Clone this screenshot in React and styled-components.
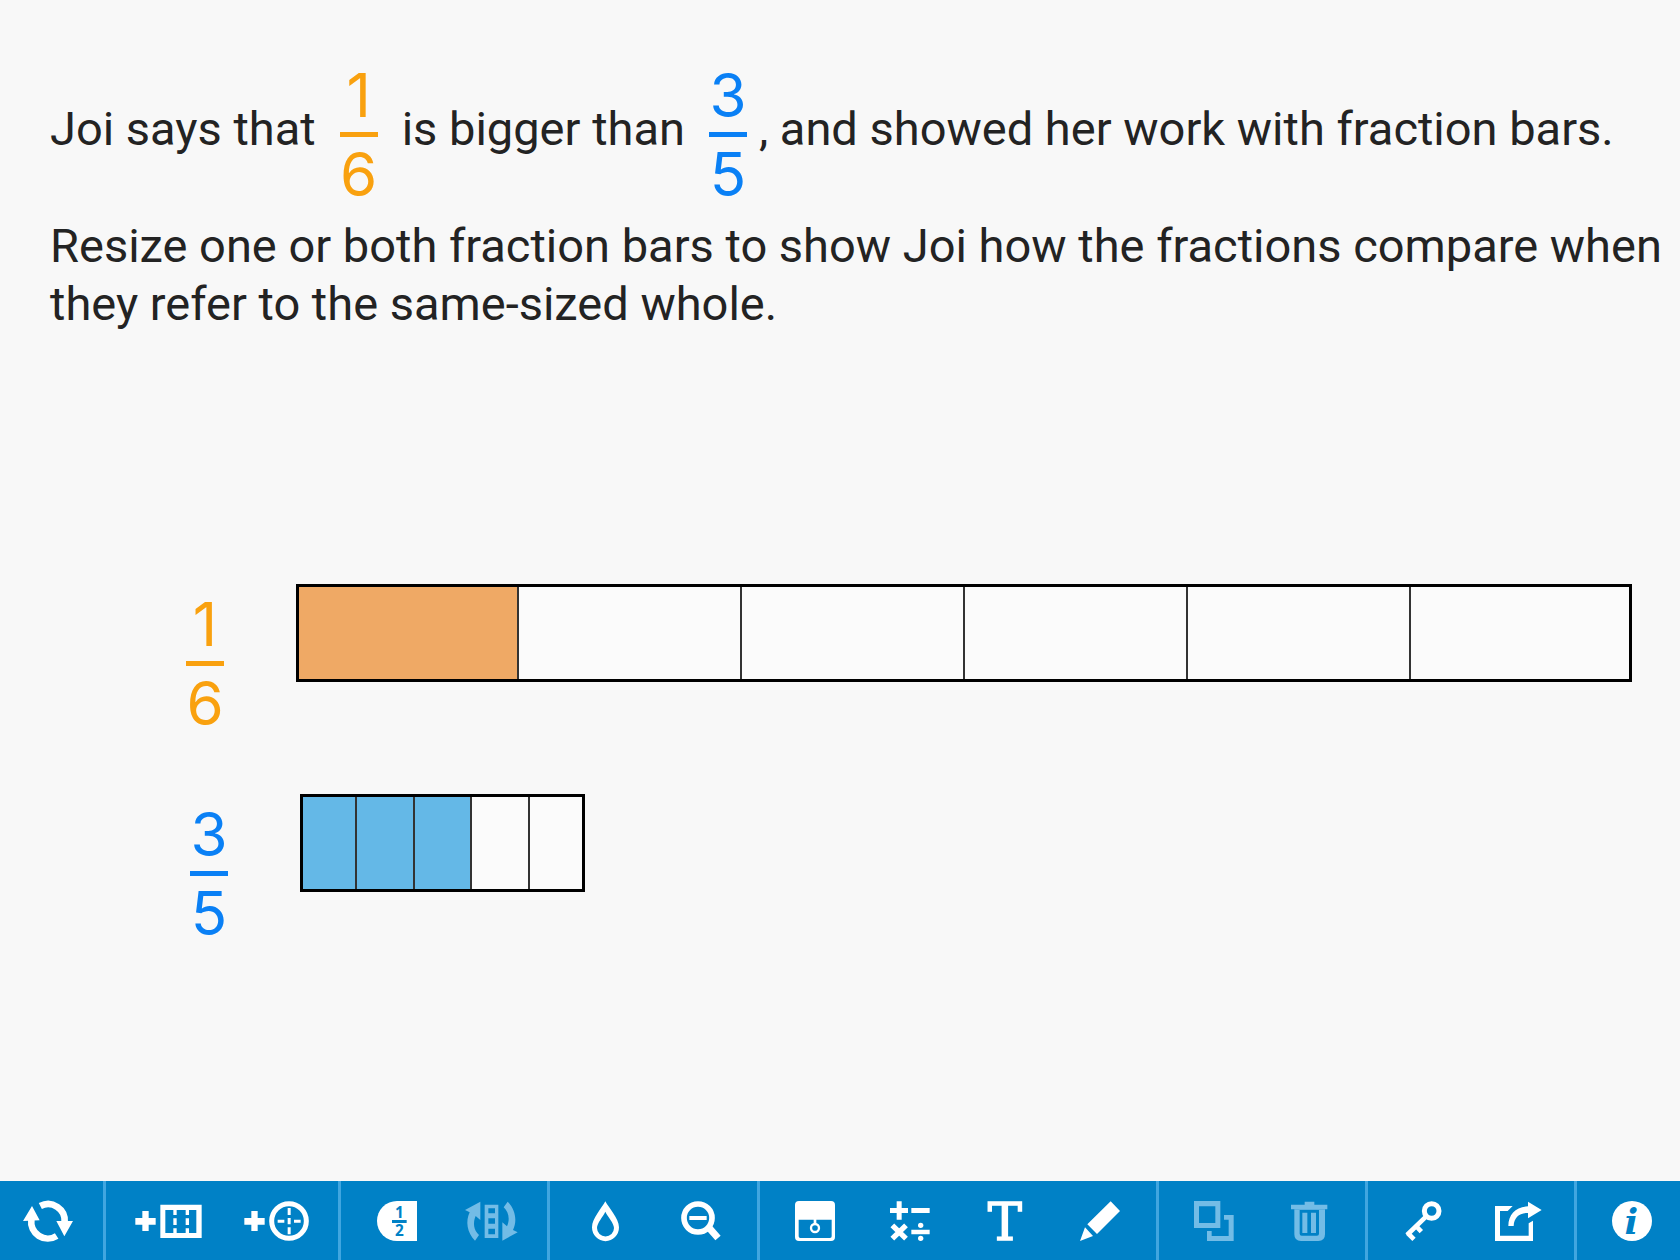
import React from "react";
import styled, { createGlobalStyle } from "styled-components";

const GlobalStyle = createGlobalStyle`
  * { box-sizing: border-box; }
  body {
    margin: 0;
    background: #f8f8f8;
    color: #232323;
    font-family: Roboto, Inter, "Liberation Sans", sans-serif;
  }
`;

const ORANGE = "#f9a10f";
const BLUE = "#0a80f5";

const Page = styled.div`
  display: flex;
  flex-direction: column;
  min-height: 100vh;
`;

const Workspace = styled.main`
  flex: 1;
  display: flex;
  flex-direction: column;
  gap: 251px;
  padding: 65px 0 48px;
`;

const Problem = styled.section`
  display: flex;
  flex-direction: column;
  gap: 13px;
  padding-left: 50px;
  font-size: 47px;
  line-height: 58px;
`;

const Statement = styled.p`
  display: flex;
  align-items: center;
  gap: 24px;
  margin: 0;
`;

const Clause = styled.span`
  display: flex;
  align-items: center;
  gap: 12px;
`;

const Phrase = styled.span`
  padding-bottom: 12px;
  white-space: nowrap;
`;

const Instruction = styled.p`
  margin: 0;
`;

const FractionBox = styled.span`
  display: inline-flex;
  flex: none;
  flex-direction: column;
  align-items: center;
  gap: 7px;
  width: 38px;
  color: ${(p) => p.$color};
  font-family: Inter, "Liberation Sans", sans-serif;
  font-size: 60px;
  line-height: 60px;
`;

const FractionRule = styled.span`
  width: 100%;
  height: 5px;
  background: currentColor;
`;

const Models = styled.section`
  display: flex;
  flex-direction: column;
  gap: 61px;
  padding-right: 48px;
`;

const ModelRow = styled.div`
  display: flex;
  align-items: flex-start;
  gap: 72px;
  padding-left: ${(p) => p.$indent}px;
`;

const ModelLabel = styled.div`
  display: flex;
  padding-top: 10px;
`;

const Bar = styled.div`
  display: flex;
  flex: ${(p) => (p.$width ? "none" : "1")};
  width: ${(p) => (p.$width ? `${p.$width}px` : "auto")};
  height: 98px;
  outline: 3px solid #000;
  outline-offset: -3px;
`;

const Part = styled.div`
  flex: 1;
  background: ${(p) => p.$fill};
  border-right: 2px solid #333;

  &:last-child {
    border-right: 0;
  }
`;

const Toolbar = styled.footer`
  display: flex;
  height: 79px;
  background: #0081c6;
`;

const Group = styled.div`
  display: flex;
  flex: 1 1 auto;
  padding: 0 8px;
  border-right: 3px solid #40a6e0;
  box-sizing: content-box;

  &:first-child {
    padding-left: 0;
  }

  &:last-child {
    padding-right: 0;
    border-right: 0;
  }
`;

const ToolButton = styled.button`
  display: flex;
  flex: 1 0 ${(p) => (p.$wide ? 108 : 95)}px;
  align-items: center;
  justify-content: center;
  padding: 0;
  border: 0;
  background: none;
  color: ${(p) => (p.disabled ? "#73bce6" : "#fff")};
  cursor: ${(p) => (p.disabled ? "default" : "pointer")};
`;

const Glyph = styled.svg`
  display: block;
  width: ${(p) => p.$width}px;
  height: 40px;
  fill: currentColor;
  overflow: visible;
`;

const HalfDigit = styled.text`
  fill: #0081c6;
  font: 700 46px "Noto Sans", "Open Sans", sans-serif;
  text-anchor: middle;
`;

const LetterT = styled.text`
  font: 400 154px "DejaVu Serif", serif;
  text-anchor: middle;
  stroke: currentColor;
  stroke-width: 4px;
`;

const LetterI = styled.text`
  fill: #0081c6;
  font: italic 700 108px "DejaVu Serif", serif;
  text-anchor: middle;
`;

function Icon({ x, width, children }) {
  return (
    <Glyph $width={width} viewBox={`${x} 90 ${width * 3} 120`} aria-hidden="true">
      {children}
    </Glyph>
  );
}

const icons = {
  reset: (
    <Icon x={66} width={50}>
      <path d="M91 146A50 50 0 0 0 167 195M118 105A50 50 0 0 1 191 154" fill="none" stroke="currentColor" strokeWidth="20" />
      <path d="M93 105L66 150L116 148ZM190 196L166 150H216Z" />
    </Icon>
  ),
  addBar: (
    <Icon x={403} width={67}>
      <path d="M425 120H444V141H465V161H444V180H425V161H404V141H425Z" />
      <path fillRule="evenodd" d="M479 101H603V201H479ZM494 117V186H587V117Z" />
      <path d="M518 116h10v16h-10zM518 142h10v20h-10zM518 172h10v15h-10zM555 116h10v16h-10zM555 142h10v20h-10zM555 172h10v15h-10z" />
    </Icon>
  ),
  addCircle: (
    <Icon x={730} width={65}>
      <path d="M752 120H771V141H792V161H771V180H752V161H731V141H752Z" />
      <circle cx="865" cy="150" r="52" fill="none" stroke="currentColor" strokeWidth="15" />
      <path d="M861 111h9v21h-9zM861 169h9v21h-9zM831 146h20v9h-20zM880 146h20v9h-20zM861 141h9v19h-9z" />
    </Icon>
  ),
  fraction: (
    <Icon x={111} width={40}>
      <path d="M231 90V210H171A60 60 0 0 1 171 90Z" />
      <HalfDigit x="178" y="140">1</HalfDigit>
      <HalfDigit x="178" y="196">2</HalfDigit>
      <path d="M156 147H200V156H156Z" fill="#0081c6" />
    </Icon>
  ),
  rotate: (
    <Icon x={376} width={53}>
      <path d="M422 92V147L408 135C399 155 402 178 418 192L406 209C382 185 377 150 390 124L376 117Z" />
      <path fillRule="evenodd" d="M435 101H476V201H435ZM446 112V127H466V112ZM446 142V158H466V142ZM446 173V190H466V173Z" />
      <path transform="rotate(180 455 150.5)" d="M422 92V147L408 135C399 155 402 178 418 192L406 209C382 185 377 150 390 124L376 117Z" />
    </Icon>
  ),
  colour: (
    <Icon x={757} width={27}>
      <path fillRule="evenodd" d="M797 91C788 109 757 142 757 169A40 41 0 0 0 838 169C838 142 806 109 797 91ZM797 122C790 137 772 156 772 171A25 25 0 0 0 823 171C823 156 804 137 797 122Z" />
    </Icon>
  ),
  zoomOut: (
    <Icon x={1022} width={40}>
      <circle cx="1073" cy="141" r="42" fill="none" stroke="currentColor" strokeWidth="17" />
      <path d="M1047 135H1099V147H1047Z" />
      <path d="M1103 167L1133 201" stroke="currentColor" strokeWidth="21" />
    </Icon>
  ),
  drawer: (
    <Icon x={165} width={40}>
      <path fillRule="evenodd" d="M177 90H273Q285 90 285 102V198Q285 210 273 210H177Q165 210 165 198V102Q165 90 177 90ZM176 146V196Q176 201 181 201H270Q275 201 275 196V146Z" />
      <path d="M221 144H229V160H221Z" />
      <circle cx="225" cy="171" r="12" fill="none" stroke="currentColor" strokeWidth="7" />
    </Icon>
  ),
  maths: (
    <Icon x={451} width={40}>
      <path d="M471 91H486V111H505V126H486V146H471V126H451V111H471ZM515 111H570V126H515ZM515 176H570V190H515Z" />
      <path d="M458 163L499 203M499 163L458 203" stroke="currentColor" strokeWidth="16" />
      <circle cx="543" cy="163" r="8" />
      <circle cx="543" cy="202" r="8" />
    </Icon>
  ),
  text: (
    <Icon x={740} width={36}>
      <LetterT x="794" y="208">T</LetterT>
    </Icon>
  ),
  pencil: (
    <Icon x={1019} width={40}>
      <path d="M1111 91L1139 120L1070 189L1041 160ZM1034 169L1058 195L1019 210Z" />
    </Icon>
  ),
  duplicate: (
    <Icon x={162} width={40}>
      <path fillRule="evenodd" d="M162 90H241V171H162ZM177 106V156H226V106Z" />
      <path d="M201 180H215V195H266V146H252V132H281V210H201Z" />
    </Icon>
  ),
  trash: (
    <Icon x={452} width={36}>
      <path d="M493 92H522V101H561V115H452V101H493Z" />
      <path fillRule="evenodd" d="M462 115H554V190Q554 210 534 210H482Q462 210 462 190ZM478 117V188Q478 194 484 194H530Q536 194 536 188V117Z" />
      <path d="M486 125H501V186H486ZM512 125H527V186H512Z" />
    </Icon>
  ),
  key: (
    <Icon x={793} width={37}>
      <circle cx="873" cy="120" r="22" fill="none" stroke="currentColor" strokeWidth="15" />
      <path d="M859 134L799 192M801 186L820 205M826 165L842 182" fill="none" stroke="currentColor" strokeWidth="14" />
    </Icon>
  ),
  share: (
    <Icon x={1062} width={47}>
      <path d="M1115 105H1062V210H1176V149L1163 157V194H1077V120H1100Z" />
      <path d="M1102 165C1102 130 1125 108 1161 106V92L1202 117L1161 142V126C1135 126 1119 140 1118 165Z" />
    </Icon>
  ),
  info: (
    <Icon x={1416} width={40}>
      <circle cx="1476" cy="150" r="60" />
      <LetterI x="1474" y="189">i</LetterI>
    </Icon>
  ),
};

const toolGroups = [
  [{ icon: "reset", label: "Start over" }],
  [
    { icon: "addBar", label: "Add bar", wide: true },
    { icon: "addCircle", label: "Add circle", wide: true },
  ],
  [
    { icon: "fraction", label: "Show fraction" },
    { icon: "rotate", label: "Rotate", disabled: true },
  ],
  [
    { icon: "colour", label: "Fill colour" },
    { icon: "zoomOut", label: "Zoom out" },
  ],
  [
    { icon: "drawer", label: "Show or hide" },
    { icon: "maths", label: "Equation" },
    { icon: "text", label: "Text" },
    { icon: "pencil", label: "Draw" },
  ],
  [
    { icon: "duplicate", label: "Duplicate", disabled: true },
    { icon: "trash", label: "Delete", disabled: true },
  ],
  [
    { icon: "key", label: "Open with code" },
    { icon: "share", label: "Share" },
  ],
  [{ icon: "info", label: "About" }],
];

const models = [
  { top: 1, bottom: 6, color: ORANGE, fill: "#efa965", indent: 186 },
  { top: 3, bottom: 5, color: BLUE, fill: "#64b8e7", indent: 190, width: 285 },
];

function Fraction({ top, bottom, color }) {
  return (
    <FractionBox $color={color}>
      <span>{top}</span>
      <FractionRule />
      <span>{bottom}</span>
    </FractionBox>
  );
}

function FractionBar({ top, bottom, fill, width }) {
  return (
    <Bar $width={width} role="img" aria-label={`${top} of ${bottom} parts shaded`}>
      {Array.from({ length: bottom }, (_, i) => (
        <Part key={i} $fill={i < top ? fill : "#fbfbfb"} />
      ))}
    </Bar>
  );
}

export default function App() {
  return (
    <Page>
      <GlobalStyle />
      <Workspace>
        <Problem>
          <Statement>
            <Phrase>Joi says that</Phrase>
            <Fraction top={1} bottom={6} color={ORANGE} />
            <Phrase>is bigger than</Phrase>
            <Clause>
              <Fraction top={3} bottom={5} color={BLUE} />
              <Phrase>, and showed her work with fraction bars.</Phrase>
            </Clause>
          </Statement>
          <Instruction>
            Resize one or both fraction bars to show Joi how the fractions compare when they refer to the same-sized
            whole.
          </Instruction>
        </Problem>
        <Models>
          {models.map((m) => (
            <ModelRow key={m.bottom} $indent={m.indent}>
              <ModelLabel>
                <Fraction top={m.top} bottom={m.bottom} color={m.color} />
              </ModelLabel>
              <FractionBar {...m} />
            </ModelRow>
          ))}
        </Models>
      </Workspace>
      <Toolbar>
        {toolGroups.map((group, i) => (
          <Group key={i}>
            {group.map((tool) => (
              <ToolButton key={tool.icon} type="button" aria-label={tool.label} disabled={tool.disabled} $wide={tool.wide}>
                {icons[tool.icon]}
              </ToolButton>
            ))}
          </Group>
        ))}
      </Toolbar>
    </Page>
  );
}
